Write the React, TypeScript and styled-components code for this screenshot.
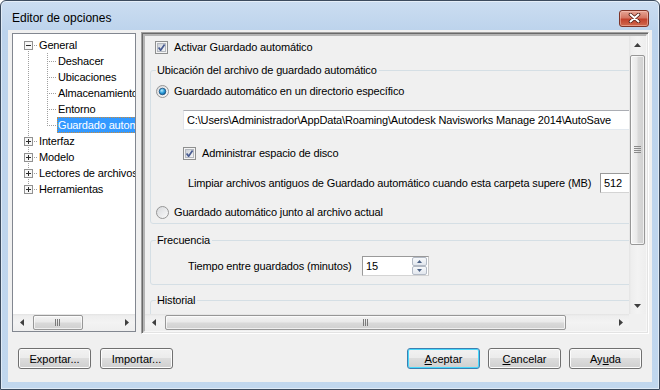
import { useId } from 'react'
import styled, { createGlobalStyle, css } from 'styled-components'

const UI_FONT = `'Liberation Sans', Arial, sans-serif`

const GlobalStyle = createGlobalStyle`
  html, body { margin: 0; padding: 0; background: #ffffff; }
  body { font-family: ${UI_FONT}; font-size: 11px; letter-spacing: -0.15px; color: #000; }
  *, *::before, *::after { box-sizing: border-box; }
`

type Vert = 'none' | 'full' | 'top' | 'bottom'
type Cell = { v: Vert; h?: boolean; box?: '+' | '-' }
type TreeNode = { label: string; cells: Cell[]; selected?: boolean }

const child: Cell[] = [{ v: 'full' }, { v: 'full', h: true }]
const root: Cell[] = [{ v: 'full', h: true, box: '+' }]

const treeNodes: TreeNode[] = [
  { label: 'General', cells: [{ v: 'bottom', h: true, box: '-' }] },
  { label: 'Deshacer', cells: child },
  { label: 'Ubicaciones', cells: child },
  { label: 'Almacenamiento', cells: child },
  { label: 'Entorno', cells: child },
  { label: 'Guardado automático', cells: [{ v: 'full' }, { v: 'top', h: true }], selected: true },
  { label: 'Interfaz', cells: root },
  { label: 'Modelo', cells: root },
  { label: 'Lectores de archivos', cells: root },
  { label: 'Herramientas', cells: [{ v: 'top', h: true, box: '+' }] },
]

const TreeConnector = ({ cell }: { cell: Cell }) => {
  const y1 = cell.v === 'bottom' ? 8 : 0
  const y2 = cell.v === 'top' ? 9 : 16
  return (
    <ConnectorSvg width="19" height="16" viewBox="0 0 19 16">
      <g stroke="#a0a0a0" strokeDasharray="1 1" shapeRendering="crispEdges">
        {cell.v !== 'none' && <line x1="9.5" y1={y1} x2="9.5" y2={y2} />}
        {cell.h && <line x1="11" y1="8.5" x2="19" y2="8.5" />}
      </g>
      {cell.box && (
        <g shapeRendering="crispEdges">
          <rect x="5.5" y="4.5" width="8" height="8" fill="#f7f7f7" stroke="#919191" />
          <line x1="7" y1="8.5" x2="12" y2="8.5" stroke="#2b2b2b" />
          {cell.box === '+' && <line x1="9.5" y1="6" x2="9.5" y2="11" stroke="#2b2b2b" />}
        </g>
      )}
    </ConnectorSvg>
  )
}

const Arrow = ({ dir }: { dir: 'up' | 'down' | 'left' | 'right' }) => {
  const vertical = dir === 'up' || dir === 'down'
  const points = {
    up: '3.5,0 7,4 0,4',
    down: '0,0 7,0 3.5,4',
    left: '4,0 4,7 0,3.5',
    right: '0,0 4,3.5 0,7',
  }[dir]
  return (
    <svg width={vertical ? 7 : 4} height={vertical ? 4 : 7} viewBox={vertical ? '0 0 7 4' : '0 0 4 7'}>
      <polygon points={points} fill="#3f3f3f" />
    </svg>
  )
}

const Grip = ({ vertical }: { vertical?: boolean }) =>
  vertical ? (
    <svg width="8" height="8" viewBox="0 0 8 8" shapeRendering="crispEdges">
      {[1, 3, 5, 7].map((y) => (
        <line key={y} x1="0" y1={y - 0.5} x2="7" y2={y - 0.5} stroke="#8a8a8a" />
      ))}
    </svg>
  ) : (
    <svg width="8" height="8" viewBox="0 0 8 8" shapeRendering="crispEdges">
      {[1, 3, 5].map((x) => (
        <line key={x} x1={x + 0.5} y1="0" x2={x + 0.5} y2="7" stroke="#7a7a7a" />
      ))}
    </svg>
  )

const HScrollBar = ({ offset, size }: { offset: number; size: number }) => (
  <HScroll>
    <ArrowCell>
      <Arrow dir="left" />
    </ArrowCell>
    <HTrack $offset={offset}>
      <HThumb $size={size}>
        <Grip />
      </HThumb>
    </HTrack>
    <ArrowCell>
      <Arrow dir="right" />
    </ArrowCell>
  </HScroll>
)

const VScrollBar = ({ offset, size }: { offset: number; size: number }) => (
  <VScroll>
    <ArrowCell>
      <Arrow dir="up" />
    </ArrowCell>
    <VTrack $offset={offset}>
      <VThumb $size={size}>
        <Grip vertical />
      </VThumb>
    </VTrack>
    <ArrowCell>
      <Arrow dir="down" />
    </ArrowCell>
  </VScroll>
)

const CheckBox = () => {
  const id = useId()
  return (
    <svg width="13" height="13" viewBox="0 0 13 13">
      <defs>
        <linearGradient id={id} x1="0" y1="0" x2="1" y2="1">
          <stop offset="0" stopColor="#cbcfd5" />
          <stop offset="1" stopColor="#f7f8f9" />
        </linearGradient>
      </defs>
      <rect x="0.5" y="0.5" width="12" height="12" fill="#f4f4f4" stroke="#8e8f8f" shapeRendering="crispEdges" />
      <rect x="2.5" y="2.5" width="8" height="8" fill={`url(#${id})`} stroke="#b4b8bf" shapeRendering="crispEdges" />
      <path d="M3.6 6.4 L5.6 9.2 L9.6 3.4" fill="none" stroke="#4a5d92" strokeWidth="1.7" strokeLinejoin="round" />
    </svg>
  )
}

const Radio = ({ checked }: { checked?: boolean }) => {
  const id = useId()
  return (
    <svg width="13" height="13" viewBox="0 0 13 13">
      <defs>
        <linearGradient id={`${id}o`} x1="0" y1="0" x2="1" y2="1">
          <stop offset="0" stopColor="#d6d8db" />
          <stop offset="1" stopColor="#fbfbfb" />
        </linearGradient>
        <radialGradient id={`${id}d`} cx="0.4" cy="0.35" r="0.7">
          <stop offset="0" stopColor="#b8ecff" />
          <stop offset="0.55" stopColor="#2a9bd8" />
          <stop offset="1" stopColor="#0b5a95" />
        </radialGradient>
      </defs>
      <circle cx="6.5" cy="6.5" r="6" fill={`url(#${id}o)`} stroke="#959595" />
      {checked && <circle cx="6.5" cy="6.5" r="3.3" fill={`url(#${id}d)`} stroke="#1d4f7c" strokeWidth="0.8" />}
    </svg>
  )
}

const SpinArrow = ({ up }: { up?: boolean }) => (
  <svg width="5" height="3" viewBox="0 0 5 3">
    <polygon points={up ? '2.5,0 5,3 0,3' : '0,0 5,0 2.5,3'} fill="#4c6286" />
  </svg>
)

const App = () => (
  <>
    <GlobalStyle />
    <Window>
      <TitleBar>
        <Title>Editor de opciones</Title>
        <CloseButton>
          <svg width="13" height="10" viewBox="0 0 13 10">
            <path d="M2.5 1.5 L10.5 8.5 M10.5 1.5 L2.5 8.5" stroke="#4b1a12" strokeWidth="3.6" strokeLinecap="round" />
            <path d="M2.5 1.5 L10.5 8.5 M10.5 1.5 L2.5 8.5" stroke="#ffffff" strokeWidth="2" strokeLinecap="round" />
          </svg>
        </CloseButton>
      </TitleBar>

      <Client>
        <MainRow>
          <TreePanel>
            <TreeBody>
              {treeNodes.map((node) => (
                <TreeRow key={node.label}>
                  {node.cells.map((cell, i) => (
                    <TreeConnector key={i} cell={cell} />
                  ))}
                  <NodeLabel $selected={node.selected}>{node.label}</NodeLabel>
                </TreeRow>
              ))}
            </TreeBody>
            <HScrollBar offset={3} size={50} />
          </TreePanel>

          <OptionsPanel>
            <ScrollArea>
              <Viewport>
                <Content>
                  <OptionRow $top={0} $indent={5} $gap={6}>
                    <CheckBox />
                    Activar Guardado automático
                  </OptionRow>

                  <Group $top={9} $bottom={4}>
                    <Legend>Ubicación del archivo de guardado automático</Legend>
                    <OptionRow $top={7} $gap={5}>
                      <Radio checked />
                      Guardado automático en un directorio específico
                    </OptionRow>
                    <FieldRow $top={12} $indent={27}>
                      <TextField
                        $width={470}
                        readOnly
                        value="C:\Users\Administrador\AppData\Roaming\Autodesk Navisworks Manage 2014\AutoSave"
                      />
                    </FieldRow>
                    <OptionRow $top={16} $indent={27} $gap={6}>
                      <CheckBox />
                      Administrar espacio de disco
                    </OptionRow>
                    <FieldRow $top={13} $indent={32}>
                      <FieldLabel $width={412}>
                        Limpiar archivos antiguos de Guardado automático cuando esta carpeta supere (MB)
                      </FieldLabel>
                      <TextField $width={44} $dark readOnly value="512" />
                    </FieldRow>
                    <OptionRow $top={12} $gap={5}>
                      <Radio />
                      Guardado automático junto al archivo actual
                    </OptionRow>
                  </Group>

                  <Group $top={9} $bottom={8}>
                    <Legend>Frecuencia</Legend>
                    <FieldRow $top={9} $indent={32}>
                      <FieldLabel $width={174}>Tiempo entre guardados (minutos)</FieldLabel>
                      <SpinBox>
                        <SpinInput readOnly value="15" />
                        <SpinButtons>
                          <SpinButton>
                            <SpinArrow up />
                          </SpinButton>
                          <SpinButton>
                            <SpinArrow />
                          </SpinButton>
                        </SpinButtons>
                      </SpinBox>
                    </FieldRow>
                  </Group>

                  <Group $top={8} $bottom={0} $minHeight={90}>
                    <Legend>Historial</Legend>
                  </Group>
                </Content>
              </Viewport>
              <VScrollBar offset={2} size={190} />
              <HScrollBar offset={3} size={401} />
              <Corner />
            </ScrollArea>
          </OptionsPanel>
        </MainRow>

        <Footer>
          <ButtonGroup $gap={9}>
            <Btn>Exportar...</Btn>
            <Btn>Importar...</Btn>
          </ButtonGroup>
          <ButtonGroup $gap={8}>
            <Btn $primary>
              <u>A</u>ceptar
            </Btn>
            <Btn>
              <u>C</u>ancelar
            </Btn>
            <Btn>
              Ay<u>u</u>da
            </Btn>
          </ButtonGroup>
        </Footer>
      </Client>
    </Window>
  </>
)

const Window = styled.div`
  width: 660px;
  height: 390px;
  border: 1px solid #3c4b5e;
  border-radius: 6px 6px 0 0;
  background: linear-gradient(#cbddf1, #bcd3ec 30px, #c1d7ee);
  box-shadow: inset 0 0 0 1px rgba(255, 255, 255, 0.5);
  display: flex;
  flex-direction: column;
  overflow: hidden;
`

const TitleBar = styled.div`
  height: 29px;
  flex: none;
  padding: 5px 10px 0 11px;
  display: flex;
  align-items: center;
  justify-content: space-between;
`

const Title = styled.span`
  font-size: 12px;
  letter-spacing: 0;
  color: #000;
`

const CloseButton = styled.div`
  width: 30px;
  height: 17px;
  border: 1px solid #7e3428;
  border-radius: 3px;
  background: linear-gradient(#e6a596, #d47663 45%, #c2412c 55%, #d06a4e);
  box-shadow: inset 0 0 0 1px rgba(255, 210, 200, 0.45);
  display: flex;
  align-items: center;
  justify-content: center;
`

const Client = styled.div`
  flex: 1;
  margin: 0 7px 7px;
  padding: 2px 3px 0 4px;
  background: #f0f0f0;
  display: flex;
  flex-direction: column;
`

const MainRow = styled.div`
  display: flex;
  align-items: flex-start;
  gap: 5px;
`

const TreePanel = styled.div`
  width: 124px;
  height: 299px;
  margin-top: 1px;
  border: 1px solid #828790;
  background: #ffffff;
  display: flex;
  flex-direction: column;
  flex: none;
`

const TreeBody = styled.div`
  flex: 1;
  overflow: hidden;
  padding: 3px 0 0 6px;
`

const TreeRow = styled.div`
  display: flex;
  height: 16px;
  white-space: nowrap;
`

const ConnectorSvg = styled.svg`
  flex: none;
  display: block;
`

const NodeLabel = styled.span<{ $selected?: boolean }>`
  height: 16px;
  line-height: 14px;
  border: 1px solid transparent;
  ${(p) =>
    p.$selected &&
    css`
      background: #3399ff;
      color: #ffffff;
      border: 1px dotted #c98b3c;
    `}
`

const OptionsPanel = styled.div`
  flex: 1;
  height: 302px;
  padding: 1px;
  border: 1px solid;
  border-color: #a0a0a0 #ffffff #ffffff #a0a0a0;
  box-shadow: inset 1px 1px 0 #696969, inset -1px -1px 0 #e3e3e3;
  display: flex;
`

const ScrollArea = styled.div`
  flex: 1;
  display: grid;
  grid-template-columns: 1fr 17px;
  grid-template-rows: 1fr 17px;
  border-style: solid;
  border-width: 2px 1px 1px 2px;
  border-color: #b4b4b4 #f7f7f7 #f7f7f7 #b4b4b4;
  min-width: 0;
`

const Viewport = styled.div`
  overflow: hidden;
  min-width: 0;
`

const Content = styled.div`
  width: 540px;
  padding: 4px 0 0 5px;
`

const OptionRow = styled.div<{ $top?: number; $indent?: number; $gap?: number }>`
  display: flex;
  align-items: center;
  height: 14px;
  gap: ${(p) => p.$gap ?? 6}px;
  margin: ${(p) => p.$top ?? 0}px 0 0 ${(p) => p.$indent ?? 0}px;
  white-space: nowrap;

  > svg {
    flex: none;
  }
`

const FieldRow = styled.div<{ $top?: number; $indent?: number }>`
  display: flex;
  align-items: center;
  height: 20px;
  margin: ${(p) => p.$top ?? 0}px 0 0 ${(p) => p.$indent ?? 0}px;
  white-space: nowrap;
`

const FieldLabel = styled.span<{ $width: number }>`
  flex: 0 0 ${(p) => p.$width}px;
`

const TextField = styled.input<{ $width: number; $dark?: boolean }>`
  width: ${(p) => p.$width}px;
  height: 20px;
  flex: none;
  padding: 0 3px;
  border: 1px solid;
  border-color: ${(p) => (p.$dark ? '#9a9a9a #c8c8c8 #d4d4d4 #9a9a9a' : '#abadb3 #dbdfe6 #e3e9ef #e2e3ea')};
  background: #ffffff;
  font: 11px ${UI_FONT};
  letter-spacing: -0.15px;
  color: #000;
  outline: none;
`

const Group = styled.fieldset<{ $top: number; $bottom: number; $minHeight?: number }>`
  margin: ${(p) => p.$top}px 0 0;
  padding: 0 0 ${(p) => p.$bottom}px 5px;
  border: 1px solid #d5dfe5;
  border-radius: 3px;
  min-width: 0;
  ${(p) => p.$minHeight && `min-height: ${p.$minHeight}px;`}
`

const Legend = styled.legend`
  padding: 0 2px 0 1px;
  line-height: 14px;
  height: 14px;
  white-space: nowrap;
`

const SpinBox = styled.div`
  width: 67px;
  height: 20px;
  flex: none;
  display: flex;
  align-items: center;
  border: 1px solid;
  border-color: #9a9a9a #c8c8c8 #d4d4d4 #9a9a9a;
  background: #ffffff;
  padding-right: 1px;
`

const SpinInput = styled.input`
  flex: 1;
  min-width: 0;
  height: 18px;
  padding: 0 3px;
  border: none;
  font: 11px ${UI_FONT};
  color: #000;
  outline: none;
  background: transparent;
`

const SpinButtons = styled.div`
  width: 15px;
  display: flex;
  flex-direction: column;
`

const SpinButton = styled.div`
  height: 9px;
  border: 1px solid #b3bac5;
  border-radius: 2px;
  background: linear-gradient(#f7f9fb, #e2e7ee);
  display: flex;
  align-items: center;
  justify-content: center;
`

const HScroll = styled.div`
  height: 17px;
  flex: none;
  display: flex;
  min-width: 0;
  background: linear-gradient(#e3e3e3, #eeeeee 2px, #f3f3f3 50%, #eeeeee);
`

const VScroll = styled.div`
  width: 17px;
  display: flex;
  flex-direction: column;
  background: linear-gradient(to right, #e3e3e3, #eeeeee 2px, #f3f3f3 50%, #eeeeee);
`

const ArrowCell = styled.div`
  width: 17px;
  height: 17px;
  flex: none;
  display: flex;
  align-items: center;
  justify-content: center;
`

const HTrack = styled.div<{ $offset: number }>`
  flex: 1;
  min-width: 0;
  display: flex;
  align-items: center;
  padding-left: ${(p) => p.$offset}px;
`

const VTrack = styled.div<{ $offset: number }>`
  flex: 1;
  display: flex;
  flex-direction: column;
  align-items: center;
  padding-top: ${(p) => p.$offset}px;
`

const HThumb = styled.div<{ $size: number }>`
  width: ${(p) => p.$size}px;
  height: 15px;
  flex: none;
  border: 1px solid #979797;
  border-radius: 2px;
  background: linear-gradient(#f4f4f4, #e9e9e9 45%, #d9d9d9 55%, #d0d0d0);
  box-shadow: inset 0 0 0 1px rgba(255, 255, 255, 0.65);
  display: flex;
  align-items: center;
  justify-content: center;
`

const VThumb = styled.div<{ $size: number }>`
  width: 15px;
  height: ${(p) => p.$size}px;
  flex: none;
  border: 1px solid #979797;
  border-radius: 2px;
  background: linear-gradient(to right, #f4f4f4, #e9e9e9 45%, #d9d9d9 55%, #d0d0d0);
  box-shadow: inset 0 0 0 1px rgba(255, 255, 255, 0.65);
  display: flex;
  align-items: center;
  justify-content: center;
`

const Corner = styled.div`
  background: #f0f0f0;
`

const Footer = styled.div`
  display: flex;
  justify-content: space-between;
  margin-top: 14px;
  padding: 0 7px 0 6px;
`

const ButtonGroup = styled.div<{ $gap: number }>`
  display: flex;
  gap: ${(p) => p.$gap}px;
`

const Btn = styled.button<{ $primary?: boolean }>`
  width: 73px;
  height: 21px;
  padding: 0;
  border: 1px solid ${(p) => (p.$primary ? '#3c7fb1' : '#707070')};
  border-radius: 3px;
  background: linear-gradient(#f2f2f2, #ebebeb 50%, #dddddd 50%, #cfcfcf);
  box-shadow: inset 0 0 0 1px ${(p) => (p.$primary ? '#48d8fb' : '#fcfcfc')};
  font: 11px ${UI_FONT};
  color: #000;

  u {
    text-underline-offset: 1px;
  }
`

export default App
